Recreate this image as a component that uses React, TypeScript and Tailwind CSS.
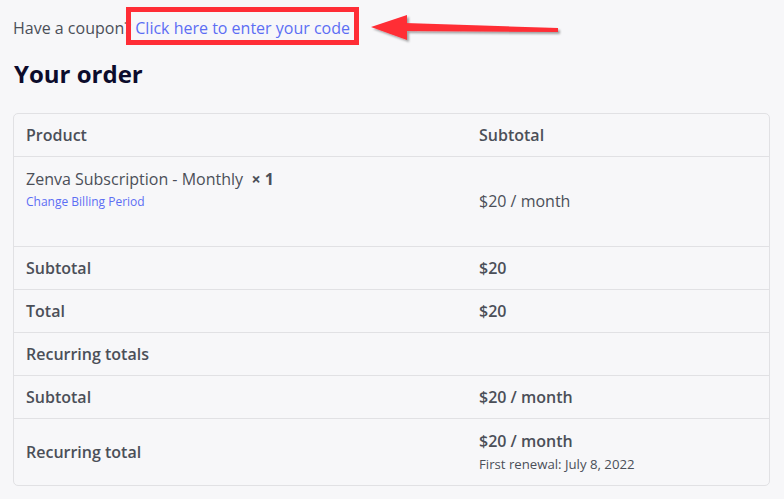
import React from 'react';

const font = { fontFamily: '"Open Sans", "Liberation Sans", sans-serif' };

function Row({
    left,
    right,
    className = '',
    bold = true,
}: {
    left: React.ReactNode;
    right?: React.ReactNode;
    className?: string;
    bold?: boolean;
}) {
    return (
        <div className={`grid grid-cols-[453px_1fr] border-t border-[#e1e1e4] ${className}`}>
            <div className={`flex flex-col justify-center px-3 ${bold ? 'font-semibold' : ''}`}>{left}</div>
            <div className={`flex flex-col justify-center px-3 ${bold ? 'font-semibold' : ''}`}>{right}</div>
        </div>
    );
}

export default function App() {
    return (
        <div
            className="relative w-[784px] h-[499px] overflow-hidden bg-[#f7f7f9] text-[#4b4f58] pl-[13px] pt-[16px]"
            style={font}
        >
            <p className="text-[16px] leading-6">
                Have a coupon? <a className="text-[#5c6ef4]">Click here to enter your code</a>
            </p>

            <h2 className="mt-[18px] text-[24px] leading-8 font-bold text-[#0c0c2c] pl-[1px]">Your order</h2>

            <div className="mt-[23px] w-[757px] rounded-[5px] border border-[#e1e1e4] text-[16px] leading-6">
                <div className="grid grid-cols-[453px_1fr] h-[42px] font-semibold">
                    <div className="flex items-center px-3">Product</div>
                    <div className="flex items-center px-3">Subtotal</div>
                </div>
                <Row
                    className="h-[90px]"
                    bold={false}
                    left={
                        <div className="-mt-[3px]">
                            <div>
                                Zenva Subscription - Monthly&nbsp; <strong className="font-bold">× 1</strong>
                            </div>
                            <a className="block text-[12px] leading-5 mt-[1px] text-[#5c6ef4]">Change Billing Period</a>
                            <div className="h-[22px]" />
                        </div>
                    }
                    right={<div className="-mt-[2px]">$20 / month</div>}
                />
                <Row className="h-[43px]" left="Subtotal" right="$20" />
                <Row className="h-[43px]" left="Total" right="$20" />
                <Row className="h-[43px]" bold={false} left={<span className="font-semibold">Recurring totals</span>} />
                <Row className="h-[43px]" left="Subtotal" right="$20 / month" />
                <Row
                    className="h-[67px]"
                    left="Recurring total"
                    right={
                        <div className="-mt-[2px]">
                            <div>$20 / month</div>
                            <div className="text-[13.2px] leading-5 font-normal mt-[1px]">First renewal: July 8, 2022</div>
                        </div>
                    }
                />
            </div>

            {/* annotation: red box and arrow */}
            <div className="absolute left-[126px] top-[7px] w-[233px] h-[38px] border-[5px] border-[#ff2d36]" />
            <svg className="absolute left-[365px] top-[10px]" width="205" height="36" viewBox="0 0 205 36">
                <defs>
                    <filter id="sh" x="-10%" y="-50%" width="120%" height="200%">
                        <feDropShadow dx="2" dy="2" stdDeviation="1.2" floodColor="#000" floodOpacity="0.35" />
                    </filter>
                </defs>
                <g filter="url(#sh)">
                    <polygon points="6,17 42,5 42,30" fill="#ff2d36" />
                    <polygon points="40,13 193,18 193,22 40,21" fill="#ff2d36" />
                </g>
            </svg>
        </div>
    );
}
